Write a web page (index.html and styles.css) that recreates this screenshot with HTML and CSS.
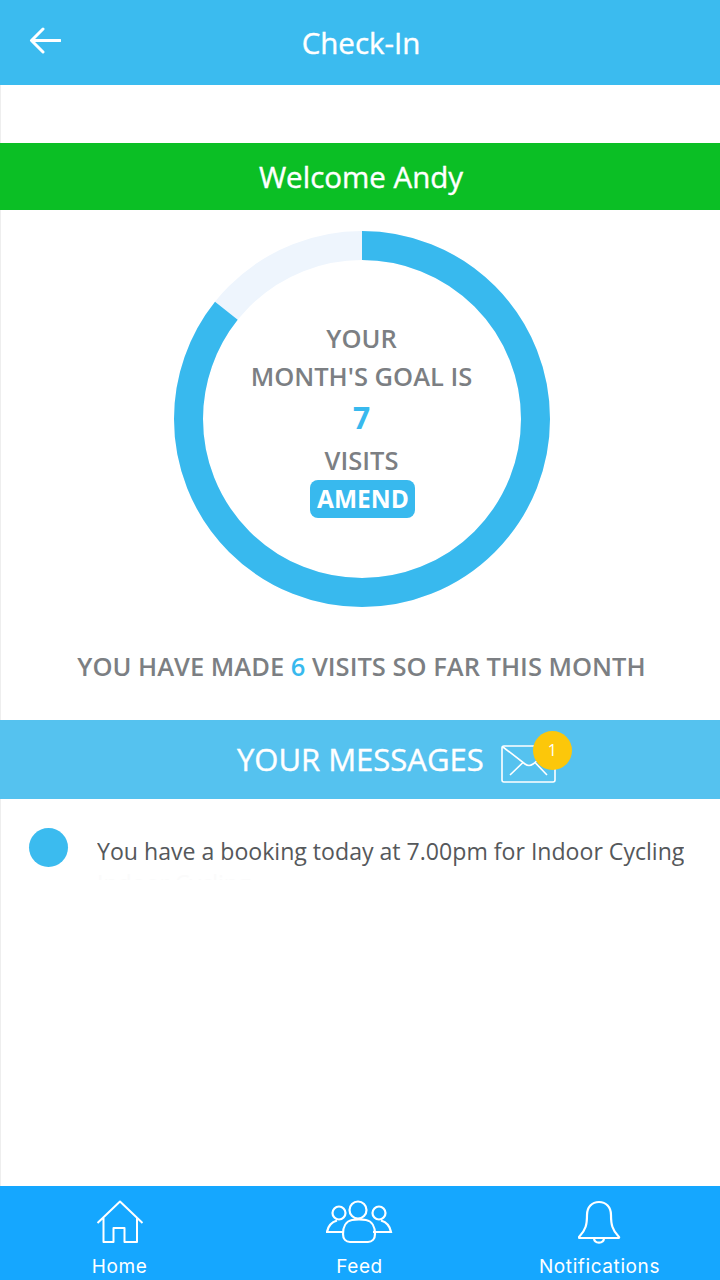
FILE: index.html
```html
<!DOCTYPE html>
<html lang="en">
<head>
    <meta charset="UTF-8">
    <meta name="viewport" content="width=device-width, initial-scale=1.0">
    <title>Check-In</title>
    <link rel="stylesheet" href="styles.css">
</head>
<body>
    <!-- Header -->
    <header class="top-bar">
        <svg class="back-icon" width="32" height="28" viewBox="0 0 32 28">
            <path d="M14 2 L2.5 13.5 L14 25 M3 13.5 H31" fill="none" stroke="#fff" stroke-width="3" stroke-linecap="round" stroke-linejoin="round"/>
        </svg>
        <h1>Check-In</h1>
    </header>

    <div class="welcome">Welcome Andy</div>

    <!-- Goal ring -->
    <section class="goal">
        <div class="ring">
            <svg class="ring-chart" width="376" height="376" viewBox="0 0 376 376">
                <circle cx="188" cy="188" r="173.5" fill="none" stroke="#eef5fd" stroke-width="29"/>
                <circle cx="188" cy="188" r="173.5" fill="none" stroke="#38b9ee" stroke-width="29" pathLength="7" stroke-dasharray="6 1" transform="rotate(-90 188 188)"/>
            </svg>
            <div class="ring-text">
                <p>YOUR</p>
                <p>MONTH'S GOAL IS</p>
                <p class="goal-number">7</p>
                <p>VISITS</p>
                <button class="amend">AMEND</button>
            </div>
        </div>
        <p class="visits-made">YOU HAVE MADE <span>6</span> VISITS SO FAR THIS MONTH</p>
    </section>

    <!-- Messages -->
    <section class="messages-bar">
        <h2>YOUR MESSAGES</h2>
        <div class="mail">
            <svg width="56" height="40" viewBox="0 0 56 40">
                <rect x="1" y="2" width="53" height="36" rx="2" fill="none" stroke="#fff" stroke-width="1.6"/>
                <path d="M2 3 L24 20 Q28 23 32 20 L53 3 M9 31 L22 18.5 M46 31 L34 18.5" fill="none" stroke="#fff" stroke-width="1.6"/>
            </svg>
            <span class="badge">1</span>
        </div>
    </section>

    <div class="message-list">
        <div class="message">
            <span class="dot"></span>
            <div class="message-text">
                <p>You have a booking today at 7.00pm for Indoor Cycling</p>
                <p class="faded">Indoor Cycling</p>
            </div>
        </div>
    </div>

    <!-- Bottom nav -->
    <nav class="bottom-nav">
        <a class="nav-item">
            <svg width="48" height="44" viewBox="0 0 48 44">
                <path d="M1.5 23 L24 1.5 L46.5 23 M7.5 18 V42 H17.5 V28 H28.5 V42 H41 V18" fill="none" stroke="#fff" stroke-width="2" stroke-linejoin="round"/>
            </svg>
            <span>Home</span>
        </a>
        <a class="nav-item">
            <svg width="68" height="44" viewBox="1 0 68 44">
                <g fill="none" stroke="#fff" stroke-width="2.2">
                    <circle cx="33" cy="10" r="8.5"/>
                    <circle cx="14" cy="13" r="6.5"/>
                    <circle cx="54" cy="13" r="6.5"/>
                    <path d="M18 32 H2 C3 26 7 22 12 20.5 M48 32 H66 C65 26 61 22 56 20.5"/>
                    <path d="M18 34 C18 27 21 21 27 20 C30 19.5 38 19.5 41 20 C47 21 50 27 50 34 C50 39 47 42 43 42 H25 C21 42 18 39 18 34 Z"/>
                </g>
            </svg>
            <span>Feed</span>
        </a>
        <a class="nav-item">
            <svg width="44" height="44" viewBox="1 0 44 44">
                <path d="M2 37 C9 30 10 24 10 15 C10 7 15 2 22 2 C29 2 34 7 34 15 C34 24 35 30 42 37 Q42.5 38 41 38 H3 Q1.5 38 2 37 Z M17 38.5 C17.5 44 26.5 44 27 38.5" fill="none" stroke="#fff" stroke-width="2.2" stroke-linejoin="round"/>
            </svg>
            <span>Notifications</span>
        </a>
    </nav>
</body>
</html>
```

FILE: styles.css
```css
* {
    box-sizing: border-box;
}

body {
    margin: 0;
    font-family: 'Open Sans', sans-serif;
    background: linear-gradient(to right, #eee 1px, #fff 1px);
    display: flex;
    flex-direction: column;
    height: 1280px;
    overflow: hidden;
}

p, h1, h2 {
    margin: 0;
}

.top-bar {
    background-color: #3bbbef;
    height: 85px;
    display: flex;
    justify-content: center;
    align-items: center;
    position: relative;
}

.top-bar h1 {
    color: #fff;
    font-size: 29.5px;
    font-weight: 400;
    -webkit-text-stroke: 0.4px #fff;
    margin-left: 2px;
}

.back-icon {
    position: absolute;
    left: 29px;
    top: 27px;
}

.welcome {
    background-color: #0bbf25;
    color: #fff;
    height: 67px;
    margin-top: 58px;
    padding-left: 2px;
    font-size: 29.5px;
    font-weight: 400;
    -webkit-text-stroke: 0.4px #fff;
    line-height: 67px;
    text-align: center;
}

.goal {
    padding: 21px 0 0 3px;
    display: flex;
    flex-direction: column;
    align-items: center;
}

.ring {
    width: 376px;
    height: 376px;
    position: relative;
    display: flex;
    flex-direction: column;
    justify-content: center;
    align-items: center;
}

.ring-chart {
    position: absolute;
    top: 0;
    left: 0;
}

.ring-text {
    padding-bottom: 2px;
    display: flex;
    flex-direction: column;
    align-items: center;
    color: #7c7f83;
    font-size: 25.5px;
    font-weight: 600;
    line-height: 38px;
    text-align: center;
    position: relative;
}

.goal-number {
    color: #38b9ee;
    font-size: 30px;
    font-weight: 700;
    line-height: 46px;
}

.amend {
    background-color: #38b9ee;
    color: #fff;
    border: none;
    border-radius: 8px;
    width: 105px;
    height: 38px;
    margin: 1px 0 0 1px;
    padding: 0 0 0 2px;
    font-family: inherit;
    font-size: 24.5px;
    font-weight: 700;
}

.visits-made {
    margin-top: 41px;
    color: #7c7f83;
    font-size: 25.5px;
    font-weight: 600;
    line-height: 36px;
    white-space: nowrap;
}

.visits-made span {
    color: #38b9ee;
}

.messages-bar {
    background-color: #55c2ef;
    height: 79px;
    margin-top: 36px;
    padding: 0 0 1px 237px;
    display: flex;
    align-items: center;
}

.messages-bar h2 {
    color: #fff;
    font-size: 31px;
    font-weight: 400;
    -webkit-text-stroke: 0.4px #fff;
}

.mail {
    margin: 9px 0 0 17px;
    position: relative;
    display: flex;
}

.badge {
    background-color: #fcc70a;
    color: #fff;
    width: 39px;
    height: 39px;
    border-radius: 50%;
    font-size: 16px;
    line-height: 39px;
    text-align: center;
    position: absolute;
    top: -13px;
    right: -15px;
}

.message-list {
    flex: 1;
    overflow: hidden;
}

.message {
    padding: 29px 0 0 29px;
    display: flex;
    gap: 29px;
}

.dot {
    background-color: #3bbbef;
    width: 39px;
    height: 39px;
    border-radius: 50%;
    flex-shrink: 0;
}

.message-text {
    color: #55585b;
    font-size: 23.1px;
    line-height: 32px;
    padding-top: 7px;
    height: 52px;
    overflow: hidden;
    white-space: nowrap;
}

.faded {
    color: #fbfbfb;
}

.bottom-nav {
    background-color: #15a7ff;
    height: 94px;
    display: grid;
    grid-template-columns: repeat(3, 240px);
    overflow: hidden;
}

.nav-item {
    color: #fff;
    padding: 14px 1px 0 0;
    font-family: 'Inter', sans-serif;
    font-size: 19px;
    letter-spacing: 0.6px;
    line-height: 22px;
    display: flex;
    flex-direction: column;
    align-items: center;
    gap: 12px;
}
```
